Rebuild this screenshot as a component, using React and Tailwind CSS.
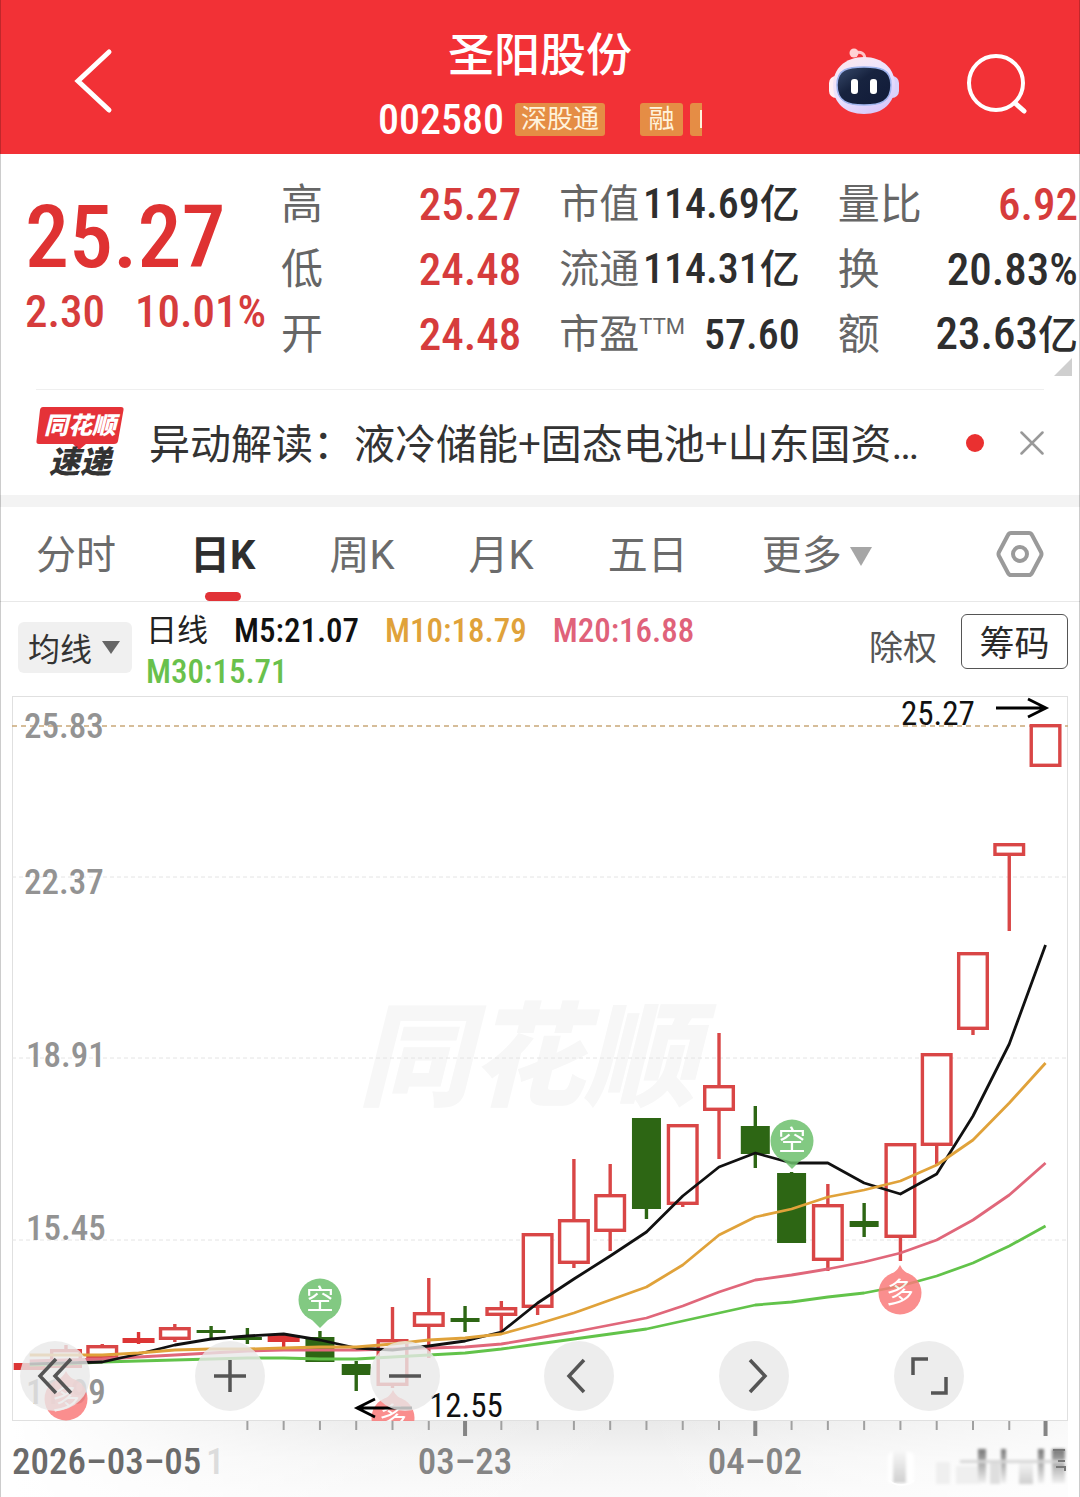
import React, { useState } from 'react';
import clsx from 'clsx';

const quotes = [
  [
    { label: '高', value: '25.27', up: true },
    { label: '低', value: '24.48', up: true },
    { label: '开', value: '24.48', up: true },
  ],
  [
    { label: '市值', value: '114.69', unit: '亿' },
    { label: '流通', value: '114.31', unit: '亿' },
    { label: '市盈', sup: 'TTM', value: '57.60' },
  ],
  [
    { label: '量比', value: '6.92', up: true },
    { label: '换', value: '20.83%' },
    { label: '额', value: '23.63', unit: '亿' },
  ],
];

const tabs = ['分时', '日K', '周K', '月K', '五日'];

// [kind, bodyTop, bodyBottom, high, low], kind: u = hollow red, r = solid red, d = green
const candles = [
  ['r', 1363, 1370, 1363, 1370],
  ['u', 1349, 1368, 1345, 1368],
  ['u', 1345, 1359, 1344, 1359],
  ['r', 1338, 1343, 1332, 1344],
  ['u', 1327, 1340, 1324, 1342],
  ['d', 1330, 1333, 1326, 1338],
  ['d', 1337, 1340, 1328, 1344],
  ['r', 1335, 1342, 1335, 1347],
  ['d', 1337, 1362, 1331, 1362],
  ['d', 1364, 1375, 1361, 1391],
  ['u', 1339, 1386, 1307, 1388],
  ['u', 1312, 1327, 1278, 1358],
  ['d', 1318, 1322, 1306, 1332],
  ['u', 1307, 1316, 1301, 1331],
  ['u', 1233, 1308, 1233, 1315],
  ['u', 1219, 1264, 1159, 1268],
  ['u', 1194, 1232, 1164, 1251],
  ['d', 1118, 1209, 1118, 1219],
  ['u', 1124, 1205, 1124, 1207],
  ['u', 1085, 1111, 1033, 1159],
  ['d', 1126, 1154, 1106, 1168],
  ['d', 1173, 1243, 1172, 1243],
  ['u', 1204, 1261, 1184, 1271],
  ['d', 1221, 1227, 1203, 1237],
  ['u', 1143, 1238, 1143, 1261],
  ['u', 1053, 1146, 1053, 1164],
  ['u', 952, 1030, 952, 1035],
  ['u', 843, 856, 843, 931],
  ['u', 724, 767, 724, 767],
];

const averages = [
  {
    color: '#62c34a',
    ys: [1365, 1364, 1362, 1361, 1360, 1359, 1358, 1358, 1359, 1359, 1357, 1355, 1353, 1349, 1344, 1339, 1334, 1329, 1321, 1313, 1305, 1302, 1297, 1293, 1286, 1276, 1263, 1246, 1226],
  },
  {
    color: '#e0677a',
    ys: [1361, 1360, 1359, 1357, 1355, 1353, 1351, 1350, 1350, 1350, 1349, 1348, 1347, 1344, 1338, 1332, 1325, 1318, 1306, 1292, 1280, 1275, 1269, 1262, 1253, 1240, 1220, 1195, 1163],
  },
  {
    color: '#111111',
    ys: [1364, 1363, 1362, 1354, 1345, 1339, 1336, 1334, 1340, 1348, 1350, 1346, 1341, 1332, 1303, 1279, 1256, 1232, 1196, 1167, 1153, 1163, 1163, 1183, 1194, 1174, 1116, 1044, 945],
  },
  {
    color: '#e0a23a',
    ys: [1355, 1355, 1355, 1353, 1350, 1349, 1349, 1348, 1347, 1347, 1344, 1340, 1338, 1334, 1324, 1313, 1300, 1287, 1265, 1235, 1217, 1209, 1197, 1190, 1181, 1165, 1140, 1103, 1063],
  },
];

const barX = (i) => 29.7 + 36.28 * i;

const Candle = ({ kind, top, bottom, high, low, x }) => {
  const color = kind === 'd' ? '#2d6614' : kind === 'r' ? '#dc3535' : '#d94646';
  return (
    <g stroke={color} strokeWidth="3.4">
      {high < top && <line x1={x} x2={x} y1={high} y2={top} />}
      {low > bottom && <line x1={x} x2={x} y1={bottom} y2={low} />}
      {kind === 'u' ? (
        <rect x={x - 14.3} y={top + 1.7} width="28.6" height={bottom - top - 3.4} fill="#fff" />
      ) : (
        <rect x={x - (kind === 'r' ? 16 : 14.5)} y={top} width={kind === 'r' ? 32 : 29} height={bottom - top} fill={color} stroke="none" />
      )}
    </g>
  );
};

const Pin = ({ x, y, down, color, children }) => (
  <g opacity="0.85">
    <path
      d={down ? `M${x - 9} ${y + 19}L${x} ${y + 28}L${x + 9} ${y + 19}Z` : `M${x - 12} ${y - 17}Q${x - 3} ${y - 21} ${x} ${y - 28}Q${x + 3} ${y - 21} ${x + 12} ${y - 17}Z`}
      fill={color}
    />
    <circle cx={x} cy={y} r="21.5" fill={color} />
    <text x={x} y={y + 10} textAnchor="middle" fontSize="28" fill="#fff" className="font-['Noto_Sans_CJK_SC',sans-serif]">
      {children}
    </text>
  </g>
);

const PriceChart = () => (
  <svg viewBox="0 696 1080 801" className="block w-full h-auto overflow-visible font-['Roboto_Condensed',Roboto,sans-serif]" role="img" aria-label="日K">
    <defs>
      <linearGradient id="axisShade" x1="0" y1="0" x2="0" y2="1">
        <stop offset="0" stopColor="#e9e9e9" />
        <stop offset="0.5" stopColor="#f5f5f5" />
        <stop offset="1" stopColor="#fafafa" />
      </linearGradient>
      <linearGradient id="axisFade" x1="0" y1="0" x2="1" y2="0">
        <stop offset="0" stopColor="#fff" />
        <stop offset="0.32" stopColor="#fff" stopOpacity="0.2" />
        <stop offset="0.6" stopColor="#fff" stopOpacity="0" />
        <stop offset="1" stopColor="#fff" stopOpacity="0.7" />
      </linearGradient>
      <linearGradient id="smear" x1="0" y1="0" x2="0" y2="1">
        <stop offset="0" stopColor="#777" />
        <stop offset="0.5" stopColor="#b4b4b4" />
        <stop offset="1" stopColor="#f0f0f0" />
      </linearGradient>
      <linearGradient id="smearLight" x1="0" y1="0" x2="0" y2="1">
        <stop offset="0" stopColor="#f8f8f8" />
        <stop offset="1" stopColor="#cfcfcf" />
      </linearGradient>
      <filter id="soft" x="-20%" y="-20%" width="140%" height="140%">
        <feGaussianBlur stdDeviation="1.4" />
      </filter>
      <clipPath id="plot">
        <rect x="12" y="696" width="1056" height="725" />
      </clipPath>
    </defs>

    <text x="358" y="1097" fontSize="113" fontWeight="900" fontStyle="italic" fill="#f7f7f7" className="font-['Noto_Sans_CJK_SC',sans-serif]">
      同花顺
    </text>

    <rect x="12" y="1420" width="1056" height="77" fill="url(#axisShade)" />
    <rect x="12" y="1420" width="1056" height="77" fill="url(#axisFade)" />
    <rect x="12.5" y="696.5" width="1055" height="724" fill="none" stroke="#e0e0e0" />

    <line x1="12" x2="1068" y1="726" y2="726" stroke="#c9a878" strokeWidth="1.5" strokeDasharray="5 4" />
    {[877, 1058, 1240].map((y) => (
      <line key={y} x1="12" x2="1068" y1={y} y2={y} stroke="#e4e4e4" strokeDasharray="4 3" />
    ))}

    <g fontSize="35" fontWeight="500" fill="#939393">
      <text x="24" y="738">25.83</text>
      <text x="24" y="894">22.37</text>
      <text x="26" y="1067">18.91</text>
      <text x="26" y="1240">15.45</text>
      <text x="26" y="1404">11.99</text>
    </g>

    <g clipPath="url(#plot)">
      {candles.map(([kind, top, bottom, high, low], i) => (
        <Candle key={i} kind={kind} top={top} bottom={bottom} high={high} low={low} x={barX(i)} />
      ))}
      {averages.map(({ color, ys }) => (
        <polyline
          key={color}
          points={ys.map((y, i) => `${barX(i)},${y}`).join(' ')}
          fill="none"
          stroke={color}
          strokeWidth="2.8"
          strokeLinejoin="round"
        />
      ))}
      <Pin x={66} y={1399} color="#fa7b7b">多</Pin>
      <Pin x={320} y={1300} color="#6dc06d" down>空</Pin>
      <Pin x={393} y={1418} color="#fa7b7b">多</Pin>
      <Pin x={792} y={1141} color="#6dc06d" down>空</Pin>
      <Pin x={900} y={1293} color="#fa7b7b">多</Pin>
    </g>

    <g fontSize="33" fill="#111">
      <text x="901" y="725">25.27</text>
      <text x="429" y="1417">12.55</text>
    </g>
    <g fill="none" stroke="#000" strokeWidth="2.8">
      <path d="M996 708H1045M1028 699L1046 708L1028 717" />
      <path d="M412 1408H358M375 1399L357 1408L375 1417" />
    </g>

    {candles.map((_, i) => {
      if (i < 6) return null;
      const major = i === 12 || i === 20 || i === 28;
      return (
        <line key={i} x1={barX(i)} x2={barX(i)} y1="1421" y2={major ? 1436 : 1430} stroke={major ? '#858585' : '#a0a0a0'} strokeWidth={major ? 4 : 2} />
      );
    })}

    <g fontSize="37" fontWeight="500">
      <text x="12" y="1474" fill="#6b6b6b">2026–03–05</text>
      <text x="206" y="1474" fill="#dcdcdc">1</text>
      <text x="465" y="1474" fill="#858585" textAnchor="middle">03–23</text>
      <text x="755" y="1474" fill="#858585" textAnchor="middle">04–02</text>
    </g>

    <g filter="url(#soft)">
      <rect x="888" y="1452" width="26" height="32" rx="5" fill="#fff" />
      <rect x="893" y="1450" width="13" height="33" fill="url(#smearLight)" />
      <rect x="936" y="1462" width="14" height="22" fill="#efefef" />
      <rect x="956" y="1466" width="24" height="18" fill="#efefef" />
      <rect x="978" y="1449" width="8" height="34" fill="url(#smear)" />
      <rect x="990" y="1462" width="10" height="22" fill="#dedede" />
      <rect x="1001" y="1449" width="5" height="34" fill="url(#smear)" />
      <rect x="1019" y="1460" width="14" height="24" fill="url(#smearLight)" />
      <rect x="1038" y="1449" width="6" height="34" fill="url(#smear)" />
      <rect x="1052" y="1449" width="13" height="34" fill="url(#smear)" />
      <rect x="960" y="1460" width="105" height="3" fill="#d6d6d6" />
    </g>
    <path d="M1053 1450H1065M1058 1461H1065M1056 1467H1065V1471" stroke="#777" strokeWidth="2" fill="none" />
    <path d="M889 1480Q893 1485 901 1485Q910 1485 914 1480" stroke="#fff" strokeWidth="2" fill="none" />
  </svg>
);

const controls = [
  { name: '最左', d: 'M36 18L20 35L36 52M51 18L35 35L51 52' },
  { name: '放大', d: 'M35 19V51M19 35H51' },
  { name: '缩小', d: 'M19 35H51' },
  { name: '向左', d: 'M40 19L25 35L40 51' },
  { name: '向右', d: 'M31 19L46 35L31 51' },
  { name: '全屏', d: 'M19 34V18H34M52 36V52H37' },
];

const Robot = () => (
  <svg viewBox="0 0 72 68" className="w-[72px] h-[68px]">
    <defs>
      <linearGradient id="shell" x1="0" y1="0" x2="0.6" y2="1">
        <stop offset="0" stopColor="#ffe9ec" />
        <stop offset="0.6" stopColor="#e9e2ff" />
        <stop offset="1" stopColor="#d9c9fa" />
      </linearGradient>
      <linearGradient id="visor" x1="0" y1="0" x2="1" y2="1">
        <stop offset="0" stopColor="#3a4c6e" />
        <stop offset="0.4" stopColor="#17233f" />
        <stop offset="1" stopColor="#101a38" />
      </linearGradient>
    </defs>
    <path d="M26 6Q37 3 37 13" stroke="#ffc4c8" strokeWidth="3" fill="none" />
    <circle cx="26" cy="6" r="4.5" fill="#ffd2d4" />
    <rect x="1" y="29" width="14" height="22" rx="7" fill="#fff0f4" />
    <rect x="57" y="29" width="14" height="22" rx="7" fill="#d9d2fb" />
    <path d="M36 10C55 10 67 22 67 38C67 56 55 67 36 67C17 67 5 56 5 38C5 22 17 10 36 10Z" fill="url(#shell)" />
    <path d="M36 20C52 20 63 22 63 38C63 55 52 58 36 58C20 58 9 55 9 38C9 22 20 20 36 20Z" fill="url(#visor)" stroke="#9fb4ee" strokeWidth="1.5" />
    <rect x="23" y="32" width="7" height="15" rx="3" fill="#fff" />
    <rect x="42" y="32" width="7" height="15" rx="3" fill="#fff" />
  </svg>
);

const Header = () => (
  <header className="grid grid-cols-[1fr_auto_1fr] items-center bg-[#f23136] h-[154px] pt-2 text-white">
    <button aria-label="返回" className="justify-self-start ml-[74px]">
      <svg viewBox="0 0 40 72" className="w-10 h-[72px]" fill="none" stroke="#fff" strokeWidth="5" strokeLinecap="round">
        <path d="M35 7L4 36L35 65" strokeLinejoin="miter" />
      </svg>
    </button>
    <div className="flex flex-col items-center w-[324px] pt-3">
      <h1 className="text-[46px] leading-[60px] font-medium">圣阳股份</h1>
      <div className="flex items-center w-full h-[60px] mt-1 overflow-hidden text-[26px] leading-[33px]">
        <span className="font-['Roboto_Condensed',Roboto,sans-serif] text-[42px] font-medium w-[137px] shrink-0">002580</span>
        <span className="bg-[#e58d45] rounded-[3px] w-[90px] text-center shrink-0 text-[#fff3dc]">深股通</span>
        <span className="bg-[#e58d45] rounded-[3px] w-[43px] ml-[35px] text-center shrink-0 text-[#fff3dc]">融</span>
        <span className="bg-[#e58d45] rounded-l-[3px] h-[33px] w-3 ml-[7px] shrink-0 flex items-center justify-end">
          <i className="block w-0.5 h-[18px] bg-[#fff3dc]" />
        </span>
      </div>
    </div>
    <div className="flex items-center justify-end gap-[66px] pr-[52px] pt-1">
      <button aria-label="问财" className="pb-1"><Robot /></button>
      <button aria-label="搜索">
        <svg viewBox="0 0 62 62" className="w-[62px] h-[62px]" fill="none" stroke="#fff" strokeWidth="4" strokeLinecap="round">
          <circle cx="30" cy="31" r="27" />
          <path d="M49 51L58 59" strokeWidth="5" />
        </svg>
      </button>
    </div>
  </header>
);

const QuoteColumn = ({ items, compact }) => (
  <dl>
    {items.map(({ label, sup, value, unit, up }) => (
      <div key={label} className="flex items-center justify-between h-[65px] whitespace-nowrap">
        <dt className={clsx('flex leading-[60px] text-[#666]', compact ? 'text-[40px]' : 'text-[42px]')}>
          {label}
          {sup && <span className="text-[22px] leading-[44px] font-[Roboto,sans-serif]">{sup}</span>}
        </dt>
        <dd className={clsx('leading-[60px] font-medium', compact ? 'text-[42px]' : 'text-[45px]', up ? 'text-[#d63c3c]' : 'text-[#2e2e2e]')}>
          {value}
          {unit && <span className="text-[40px]">{unit}</span>}
        </dd>
      </div>
    ))}
  </dl>
);

const QuotePanel = () => (
  <section className="relative flex pl-[25px] pr-0.5 pt-[18px] pb-[22px] font-['Roboto_Condensed','Noto_Sans_CJK_SC',sans-serif]">
    <div className="w-64 shrink-0 text-[#df3232] font-medium">
      <div className="text-[88px] leading-[90px] pt-5">25.27</div>
      <div className="flex gap-[30px] text-[45px] leading-[60px] text-[#d63c3c]">
        <span>2.30</span>
        <span>10.01%</span>
      </div>
    </div>
    <div className="grid grid-cols-3 gap-x-[38px] flex-1">
      {quotes.map((items, i) => (
        <QuoteColumn key={i} items={items} compact={i === 1} />
      ))}
    </div>
    <svg viewBox="0 0 18 18" className="absolute right-2 bottom-[13px] w-[18px] h-[18px]"><path d="M18 0V18H0Z" fill="#cfcfcf" /></svg>
  </section>
);

const NewsBar = () => (
  <section className="mx-9 h-[106px] border-t border-[#efefef] flex items-center">
    <div className="relative w-[88px] h-[72px] shrink-0 font-black italic">
      <svg viewBox="0 0 88 72" className="absolute inset-0 w-full h-full">
        <path d="M7 0H85Q88 0 87.500 3L82 34Q81.500 37 78 37H50L43 43L37 37H3Q0 37 0.500 34L4 3Q4.500 0 7 0Z" fill="#e53238" />
      </svg>
      <div className="relative text-white text-[24px] leading-[38px] text-center">同花顺</div>
      <div className="relative text-[#333] text-[31px] leading-[36px] text-center">速递</div>
    </div>
    <a href="#news" className="flex-1 ml-[25px] text-[41px] leading-[60px] text-[#333] whitespace-nowrap font-['Noto_Sans_CJK_SC',sans-serif]">
      异动解读：液冷储能+固态电池+山东国资<span className="font-[Roboto,sans-serif]">…</span>
    </a>
    <span className="w-[18px] h-[18px] rounded-full bg-[#ea3030] mr-9" />
    <button aria-label="关闭">
      <svg viewBox="0 0 24 24" className="w-6 h-6" stroke="#999" strokeWidth="2.5" strokeLinecap="round">
        <path d="M1.500 1.500L22.500 22.500M22.500 1.500L1.500 22.500" />
      </svg>
    </button>
  </section>
);

const Tabs = ({ active, onChange }) => (
  <nav className="flex items-center gap-[74px] h-[95px] px-9 border-b border-[#e8e8e8] text-[40px] leading-[60px] text-[#6b6b6b] whitespace-nowrap">
    {tabs.map((tab) => (
      <button key={tab} onClick={() => onChange(tab)} className={clsx('relative h-full pt-1', tab === active && 'font-bold text-[#2e2e2e]')}>
        {tab}
        {tab === active && <span className="absolute left-1/2 -translate-x-1/2 bottom-0 w-9 h-[9px] rounded-full bg-[#e13237]" />}
      </button>
    ))}
    <button className="flex items-center gap-2 pt-1">
      更多
      <svg viewBox="0 0 22 19" className="w-[22px] h-[19px]"><path d="M0 0H22L11 19Z" fill="#a6a6a6" /></svg>
    </button>
    <button aria-label="设置" className="ml-auto">
      <svg viewBox="0 0 48 46" className="w-12 h-[46px]" fill="none" stroke="#9a9a9a" strokeWidth="4" strokeLinejoin="round">
        <path d="M15 2H33Q35 2 36 4L45 21Q46 23 45 25L36 42Q35 44 33 44H15Q13 44 12 42L3 25Q2 23 3 21L12 4Q13 2 15 2Z" />
        <circle cx="24" cy="23" r="7" />
      </svg>
    </button>
  </nav>
);

const IndicatorBar = () => (
  <section className="flex items-start h-[94px] pl-[18px] pr-3 pt-3">
    <div className="relative mt-2 shrink-0">
      <select aria-label="指标" className="block appearance-none w-[114px] h-[51px] pt-1 pl-2.5 rounded-md bg-[#f0f0f0] text-[32px] text-[#333]">
        <option>均线</option>
      </select>
      <svg viewBox="0 0 18 13" className="absolute right-3 top-[19px] w-[18px] h-[13px] pointer-events-none"><path d="M0 0H18L9 13Z" fill="#666" /></svg>
    </div>
    <div className="flex flex-wrap gap-x-[26px] flex-1 pl-3.5 pr-[60px] -mt-1 text-[33px] leading-[41px] font-medium font-['Roboto_Condensed','Noto_Sans_CJK_SC',sans-serif]">
      <span className="text-[31px] font-normal text-[#222]">日线</span>
      <span className="text-[#111]">M5:21.07</span>
      <span className="text-[#e0a23a]">M10:18.79</span>
      <span className="text-[#e0627a]">M20:16.88</span>
      <span className="text-[#69c14c]">M30:15.71</span>
    </div>
    <button className="text-[34px] leading-[60px] text-[#555] mr-6 mt-1">除权</button>
    <button className="w-[107px] h-[55px] pt-1 rounded-md border border-[#555] text-[35px] text-[#2a2a2a]">筹码</button>
  </section>
);

const App = () => {
  const [tab, setTab] = useState('日K');

  return (
    <div className="relative bg-white font-[Roboto,'Noto_Sans_CJK_SC',sans-serif]">
      <Header />
      <QuotePanel />
      <NewsBar />
      <div className="h-3 bg-[#f3f3f3]" />
      <Tabs active={tab} onChange={setTab} />
      <IndicatorBar />
      <main className="relative">
        <PriceChart />
        <div className="absolute left-5 right-[116px] bottom-[86px] flex justify-between">
          {controls.map(({ name, d }) => (
            <button key={name} aria-label={name} className="w-[70px] h-[70px] rounded-full bg-[#e8e8e8]/80">
              <svg viewBox="0 0 70 70" fill="none" stroke="#555" strokeWidth="3.5"><path d={d} /></svg>
            </button>
          ))}
        </div>
      </main>
      <div className="absolute inset-0 border-x border-black/20 pointer-events-none" />
    </div>
  );
};

export default App;
